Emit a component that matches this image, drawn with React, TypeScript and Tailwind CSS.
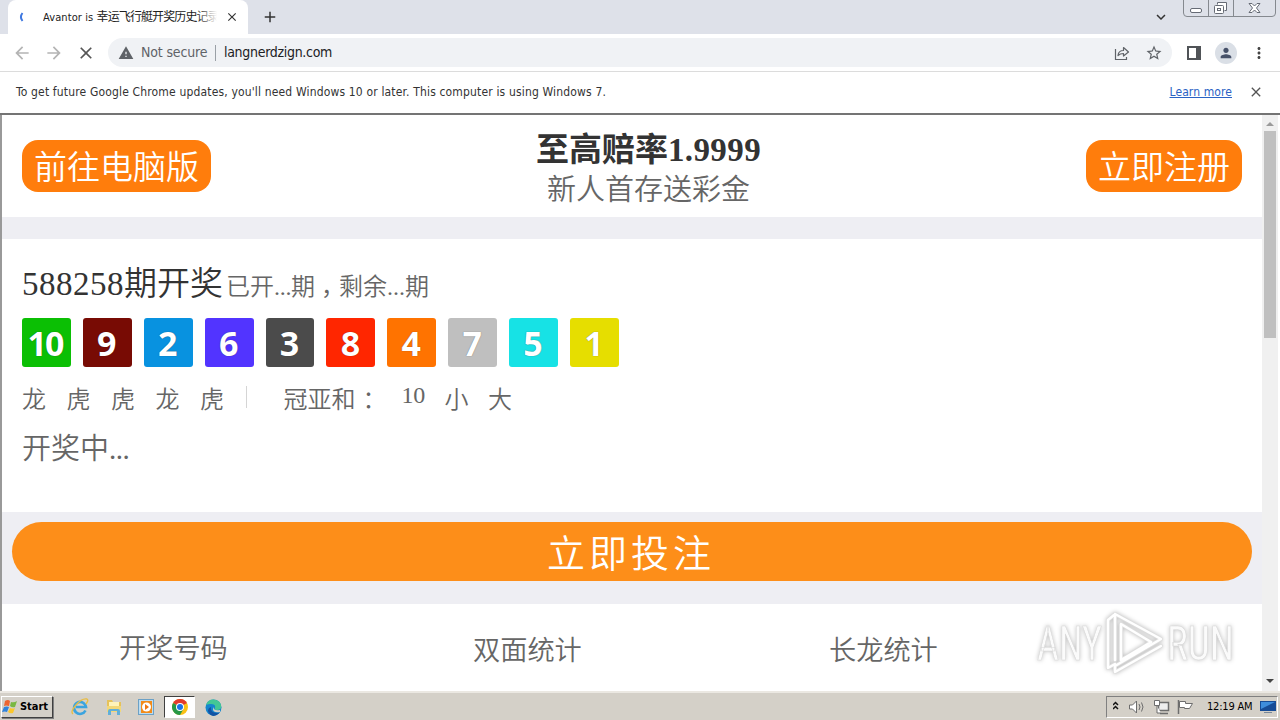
import React from 'react';
import { MdArrowBack, MdArrowForward, MdClose, MdStarBorder, MdWarning, MdPerson, MdMoreVert, MdAdd, MdKeyboardArrowDown } from 'react-icons/md';

const BALLS = [
  { value: 10, color: 'bg-[#0bbf04]' },
  { value: 9, color: 'bg-[#780b04]' },
  { value: 2, color: 'bg-[#0892e0]' },
  { value: 6, color: 'bg-[#5234ff]' },
  { value: 3, color: 'bg-[#4b4b4b]' },
  { value: 8, color: 'bg-[#ff2600]' },
  { value: 4, color: 'bg-[#ff7300]' },
  { value: 7, color: 'bg-[#bfbfbf]' },
  { value: 5, color: 'bg-[#17e2e5]' },
  { value: 1, color: 'bg-[#e6de00]' },
];

const DRAGON_TIGER = ['龙', '虎', '虎', '龙', '虎'];

function WindowButtons() {
  return (
    <svg className="w-[94px] h-[18px] shrink-0" viewBox="0 0 94 18" fill="none" stroke="#666b75">
      <path d="M.5 0v13q0 3.500 3.500 3.500h85q3.500 0 3.500-3.500V0M25.500 0v16M50.500 0v16" stroke="#85898f" />
      <rect x="7.500" y="8.500" width="11" height="4" rx="1.500" fill="#fff" />
      <path d="M34.500 4.500v-2h9v8h-2" fill="#fff" />
      <rect x="31.500" y="5.500" width="9" height="8" rx="1" fill="#fff" />
      <rect x="34.500" y="8.500" width="3" height="2" />
      <path d="M66 3.500h3l2.500 2.500 2.500-2.500h3l-3.500 4.500 3.500 4.500h-3l-2.500-2.500-2.500 2.500h-3l3.500-4.500z" fill="#fff" />
    </svg>
  );
}

function TabStrip() {
  return (
    <div className="flex h-[34px] bg-[#dee1e9]">
      <div className="flex w-[240px] ml-2 bg-white rounded-t-lg items-center">
        <svg className="w-3 h-3 ml-2 shrink-0" viewBox="0 0 12 12" fill="none" stroke="#3f78e0" strokeWidth="2">
          <path d="M6.500 2q-3.200 4 0 8" />
        </svg>
        <div className="relative ml-[15px] w-[174px] h-5 overflow-hidden whitespace-nowrap text-[11px] leading-5 text-[#222]">
          <span className="tracking-[0.1px]">Avantor is </span>
          <span className="text-[12px] tracking-[-0.9px]">幸运飞行艇开奖历史记录</span>
          <div className="absolute right-0 top-0 w-5 h-5 bg-linear-to-r from-transparent to-white" />
        </div>
        <MdClose className="w-[14px] h-[14px] ml-2 text-[#333] stroke-current" />
      </div>
      <MdAdd className="w-[18px] h-[18px] ml-[13px] mt-2 text-[#333]" />
      <div className="flex-1" />
      <MdKeyboardArrowDown className="w-[18px] h-[18px] mt-[8px] mr-[13px] text-[#333]" />
      <WindowButtons />
      <div className="w-[3px]" />
    </div>
  );
}

function Toolbar() {
  return (
    <div className="flex h-[38px] items-center bg-white border-b border-[#dcdcdc] text-[#5f6368]">
      <MdArrowBack className="w-5 h-5 ml-3 text-[#b4b4b4]" />
      <MdArrowForward className="w-5 h-5 ml-3 text-[#b4b4b4]" />
      <MdClose className="w-5 h-5 ml-3 text-[#555]" />
      <div className="flex items-center w-[1064px] h-[29px] ml-3 rounded-full bg-[#f0f2f5] text-[14px]">
        <MdWarning className="w-4 h-4 ml-[10px]" />
        <span className="ml-[7px] w-[68px] whitespace-nowrap tracking-[-0.15px]">Not secure</span>
        <div className="w-px h-4 ml-[6px] bg-[#9aa0a6]" />
        <span className="ml-[8px] tracking-[-0.3px] text-[#202124]">langnerdzign.com</span>
        <div className="flex-1" />
        <svg className="w-4 h-4 mr-[15px]" viewBox="0 0 16 16" fill="none" stroke="currentColor" strokeWidth="1.200">
          <path d="M1.500 4v10.500h11V12" />
          <path d="M4 10.500q.5-5 5.500-5V2.500l5 4.500-5 4V8.500q-3.500 0-5.500 2z" strokeLinejoin="round" />
        </svg>
        <MdStarBorder className="w-[18px] h-[18px] mr-[9px]" />
      </div>
      <svg className="w-[14px] h-[14px] ml-[15px]" viewBox="0 0 14 14">
        <path d="M0 0h14v14H0zM2 2v10h7V2z" fill="#505357" fillRule="evenodd" />
      </svg>
      <div className="flex items-center justify-center w-[22px] h-[22px] ml-[14px] rounded-full bg-[#dadfe6]">
        <MdPerson className="w-4 h-4 text-[#465169]" />
      </div>
      <MdMoreVert className="w-[18px] h-[18px] ml-[13px] text-[#444]" />
    </div>
  );
}

function InfoBar() {
  return (
    <div className="flex h-[43px] items-center bg-white border-b-2 border-[#747474] pl-4 pr-[16px] pb-[2px] text-[12px] text-[#333]">
      <span className="whitespace-nowrap tracking-[0.160px]">
        To get future Google Chrome updates, you'll need Windows 10 or later. This computer is using Windows 7.
      </span>
      <div className="flex-1" />
      <span className="underline text-[#2a62c4] tracking-[0.1px]">Learn more</span>
      <MdClose className="w-4 h-4 ml-[16px] text-[#555] stroke-current" />
    </div>
  );
}

function PageHeader() {
  return (
    <div className="flex justify-between h-[102px] bg-white pl-5 pr-5">
      <div className="flex items-center justify-center w-[189px] h-[52px] pt-[4px] mt-[25px] rounded-[16px] bg-[#ff7d0c] text-white text-[33px] leading-none">
        前往电脑版
      </div>
      <div className="flex flex-col items-center">
        <div className="h-[42px] mt-[14px] leading-[42px] text-[33px] font-bold text-[#333] whitespace-nowrap">
          至高赔率<span className="tracking-[0.4px]">1.9999</span>
        </div>
        <div className="h-[38px] leading-[38px] text-[29px] text-[#666]">新人首存送彩金</div>
      </div>
      <div className="flex items-center justify-center w-[156px] h-[52px] pt-[4px] mt-[25px] rounded-[16px] bg-[#ff7d0c] text-white text-[33px] leading-none">
        立即注册
      </div>
    </div>
  );
}

function DrawResult() {
  return (
    <div className="h-[273px] bg-white pl-5 pt-[22px] text-[#666]">
      <div className="flex items-baseline h-[48px] leading-[46px] whitespace-nowrap">
        <span className="text-[33px] text-[#333]"><span className="tracking-[0.5px]">588258</span>期开奖</span>
        <span className="ml-[3px] text-[24px]">
          已开<span className="tracking-[-0.3px]">...</span>期<span className="pl-[6px] tracking-[-6px]">，</span>剩余<span>...</span>期
        </span>
      </div>
      <div className="flex gap-[12px] mt-[9px]">
        {BALLS.map((ball) => (
          <div
            key={ball.value}
            className={`flex items-center justify-center w-[48.900px] h-[49px] pr-[3px] rounded-[3px] font-['Noto_Sans'] font-bold text-[34px] leading-none tracking-[-2px] text-white [text-shadow:0_0_1px_#0008] ${ball.color}`}
          >
            {ball.value}
          </div>
        ))}
      </div>
      <div className="flex h-[48px] mt-[9px] leading-[48px] text-[24px]">
        {DRAGON_TIGER.map((item, idx) => (
          <span key={idx} className="w-[44.500px]">{item}</span>
        ))}
        <div className="w-px h-[22px] mt-[10px] ml-[1px] bg-[#d5d5d5]" />
        <span className="ml-[37px] w-[118px]">冠亚和<span className="pl-[7px]">：</span></span>
        <span className="w-[43px] leading-[39px] tracking-[-0.3px]">10</span>
        <span className="w-[43.500px]">小</span>
        <span>大</span>
      </div>
      <div className="h-[48px] leading-[50px] text-[29px]">开奖中<span className="tracking-[-0.5px]">...</span></div>
    </div>
  );
}

function StatTabs() {
  return (
    <div className="flex h-[87px] bg-white text-[27.200px] leading-[40px] text-[#666]">
      <span className="ml-[117px] mt-[25px] w-[354px]">开奖号码</span>
      <span className="mt-[27px] w-[356px]">双面统计</span>
      <span className="mt-[27px]">长龙统计</span>
    </div>
  );
}

function Scrollbar() {
  return (
    <div className="flex flex-col items-center w-4 mr-[2px] bg-[#f0f0f0]">
      <svg className="w-2 h-4" viewBox="0 0 8 16"><path d="M0 11l4-4 4 4z" fill="#9a9a9a" /></svg>
      <div className="w-3 h-[207px] bg-[#c0c0c0]" />
      <div className="flex-1" />
      <svg className="w-2 h-[18px]" viewBox="0 0 8 18"><path d="M0 6l4 4 4-4z" fill="#444" /></svg>
    </div>
  );
}

function Watermark() {
  return (
    <svg className="absolute left-[1032px] top-[604px] w-[220px] h-[80px] drop-shadow-[0_0_2px_#bbb]" viewBox="0 0 220 80">
      <g fill="#fff" fillOpacity=".9" stroke="#d8d8d8" strokeWidth=".6" fontFamily="Roboto, sans-serif" fontSize="48">
        <text x="5" y="56" textLength="65" lengthAdjust="spacingAndGlyphs">ANY</text>
        <text x="135" y="56" textLength="67" lengthAdjust="spacingAndGlyphs">RUN</text>
      </g>
      <g fill="none" strokeLinejoin="round" strokeLinecap="round">
        <path d="M76 16v48l7-4M76 16l6-5M83 10v46M83 10l46 25-46 27v6l46-26M89 20l30 18-30 18z" stroke="#dedede" strokeWidth="4" />
        <path d="M76 16v48l7-4M76 16l6-5M83 10v46M83 10l46 25-46 27v6l46-26M89 20l30 18-30 18z" stroke="#fff" strokeWidth="2.500" />
      </g>
    </svg>
  );
}

function StartLogo() {
  return (
    <svg className="w-[17px] h-4" viewBox="0 0 17 16">
      <path d="M3 2q3-2 5 0L7 7q-3-1-5 0z" fill="#ed6531" />
      <path d="M9 3q3 1 6-1l-2 6q-3 1-5-1z" fill="#79b843" />
      <path d="M2 8q3-1 5 0l-2 5q-2-1-5 0z" fill="#2f83dc" />
      <path d="M8 9q3 1 5 0l-2 5q-3 1-5-1z" fill="#fbc72c" />
    </svg>
  );
}

function IeIcon() {
  return (
    <svg className="w-[18px] h-[18px]" viewBox="0 0 18 18" fill="none">
      <path d="M14.500 12.500A6 6 0 1 1 15 9H5" stroke="#3ba4df" strokeWidth="2.600" />
      <path d="M2 16Q-1 14 5 7t11-6q2 1-1 5" stroke="#e9bd42" strokeWidth="1.300" />
    </svg>
  );
}

function FolderIcon() {
  return (
    <svg className="w-4 h-[18px]" viewBox="0 0 16 18">
      <path d="M1 2h5l1 2h8v10H1z" fill="#e6c25a" />
      <path d="M3 4h10v5H3z" fill="#fff3b9" />
      <path d="M1 8h14v6H1z" fill="#f3d878" />
      <path d="M2 17v-4q0-2 2-2h8q2 0 2 2v4h-3v-4H5v4z" fill="#60afd9" />
    </svg>
  );
}

function PlayerIcon() {
  return (
    <svg className="w-4 h-4" viewBox="0 0 16 16">
      <rect x=".5" y=".5" width="15" height="15" fill="#bcdcf0" stroke="#6ca1c6" />
      <rect x="3" y="2" width="11" height="12" fill="#f28b19" />
      <circle cx="8.500" cy="8" r="4.500" fill="#fff" />
      <path d="M7 5l4 3-4 3z" fill="#ee7710" />
    </svg>
  );
}

function ChromeIcon() {
  return (
    <svg className="w-4 h-4" viewBox="0 0 16 16">
      <circle cx="8" cy="8" r="8" fill="#fbc116" />
      <path d="M8 8L1.070 4A8 8 0 0 1 14.930 4z" fill="#e33b2e" />
      <path d="M8 8L1.070 4A8 8 0 0 0 8 16l3.500-6z" fill="#279847" />
      <circle cx="8" cy="8" r="4" fill="#fff" />
      <circle cx="8" cy="8" r="3" fill="#1a73e8" />
    </svg>
  );
}

function EdgeIcon() {
  return (
    <svg className="w-[17px] h-[17px]" viewBox="0 0 17 17">
      <circle cx="8.500" cy="8.500" r="8" fill="#1585cd" />
      <path d="M1 6Q4-1 11 1q6 2 5 8-1 2-5 2-2-1-1-2 1-4-4-4-3 0-5 1z" fill="#43c795" />
      <path d="M6 8q-1 5 5 6 3 0 4-1-3 4-7 4-4-1-5-5 0-3 3-4z" fill="#1253a4" />
      <path d="M9 8q-1 4 6 3v2q-7 1-7-3z" fill="#d4d0c8" />
    </svg>
  );
}

function TrayIcons() {
  return (
    <svg className="w-[82px] h-[18px]" viewBox="0 0 82 18" fill="none" stroke="#6d6d6d">
      <path d="M0 7l2.500-2.500L5 7M0 11l2.500-2.500L5 11" stroke="#111" strokeWidth="1.500" />
      <path d="M16.500 7h3l4-4v12l-4-4h-3z" fill="#fff" />
      <path d="M26 6q2 3 0 6M28.500 4.500q3 4.500 0 9" />
      <path d="M45.500 4.500h10v8h-10zM47 15.500h8" fill="#eee" strokeWidth="1.500" />
      <path d="M41.500 2.500h5v5h-5zM44 8v7h4" fill="#fff" />
      <path d="M65.500 2v14" strokeWidth="1.500" />
      <path d="M66.500 3.500h6v2h7l-3 5h-5v-1h-5z" fill="#fff" />
    </svg>
  );
}

function Taskbar() {
  return (
    <div className="flex items-center h-[29px] bg-[#d4d0c8] border-t-2 border-[#ebe8e2] pr-[2px] text-black">
      <div className="flex items-center w-[52px] h-[22px] ml-[1px] mt-[1px] border border-t-white border-l-white border-r-[#404040] border-b-[#404040] shadow-[1px_1px_0_#808080]">
        <StartLogo />
        <span className="ml-[1px] text-[11px] font-bold tracking-[-0.050px]">Start</span>
      </div>
      <div className="flex items-center ml-[18px] mt-[1px] gap-[16.500px]">
        <IeIcon />
        <FolderIcon />
        <PlayerIcon />
      </div>
      <div className="flex items-center justify-center w-[31px] h-[22px] ml-[10px] bg-white border border-t-[#404040] border-l-[#404040] border-r-white border-b-white">
        <ChromeIcon />
      </div>
      <div className="ml-[10px] mt-[1px]"><EdgeIcon /></div>
      <div className="flex-1" />
      <div className="flex items-center w-[172px] h-[22px] pl-[6px] pt-[1px] border border-t-[#808080] border-l-[#808080] border-r-white border-b-white">
        <TrayIcons />
        <span className="ml-[12px] w-[47px] text-[11px] whitespace-nowrap tracking-[-0.200px]">12:19 AM</span>
        <svg className="w-4 h-[14px] ml-[6px]" viewBox="0 0 16 14">
          <rect x="0" y="1" width="16" height="10" fill="#174c96" />
          <path d="M1 2h14L1 9z" fill="#3e8ddc" />
          <path d="M4 12h8v1H4z" fill="#778799" />
        </svg>
      </div>
    </div>
  );
}

export default function App() {
  return (
    <div className="relative flex flex-col w-[1280px] h-[720px] overflow-hidden bg-white font-['DejaVu_Sans_Condensed','DejaVu_Sans','Noto_Sans_CJK_SC',sans-serif] [font-stretch:condensed]">
      <TabStrip />
      <Toolbar />
      <InfoBar />
      <div className="flex h-[576px] bg-white border-l-2 border-[#999] [font-stretch:normal]">
        <div className="flex flex-col w-[1260px] bg-[#eeeef3] font-[350] font-['Liberation_Serif','Noto_Sans_CJK_SC',serif]">
          <PageHeader />
          <div className="h-[22px]" />
          <DrawResult />
          <div className="h-[92px] pt-[10px] px-[10px]">
            <div className="h-[59px] rounded-full bg-[#fd8e19] text-center text-[38px] leading-[64px] tracking-[4px] text-white pr-[2px]">
              立即投注
            </div>
          </div>
          <StatTabs />
        </div>
        <Scrollbar />
      </div>
      <Taskbar />
      <Watermark />
    </div>
  );
}
